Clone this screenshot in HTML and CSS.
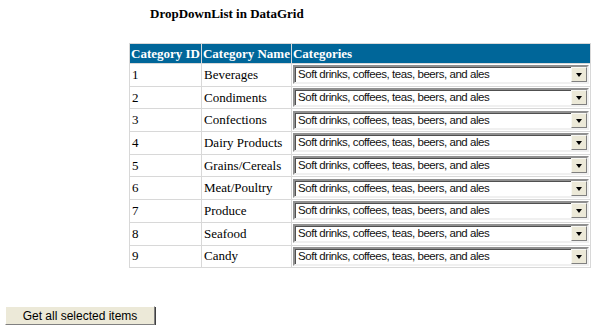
FILE: index.html
```html
<!DOCTYPE html>
<html lang="en">
<head>
    <meta charset="UTF-8">
    <title>DropDownList in DataGrid</title>
    <link rel="stylesheet" href="styles.css">
</head>
<body>
    <!-- Page title -->
    <h4 class="title">DropDownList in DataGrid</h4>
    <table class="grid">
        <tr>
            <th class="col-id">Category ID</th>
            <th class="col-name">Category Name</th>
            <th>Categories</th>
        </tr>
        <tr><td>1</td><td>Beverages</td><td><div class="dropdown"><span class="value">Soft drinks, coffees, teas, beers, and ales</span><span class="arrow"></span></div></td></tr>
        <tr><td>2</td><td>Condiments</td><td><div class="dropdown"><span class="value">Soft drinks, coffees, teas, beers, and ales</span><span class="arrow"></span></div></td></tr>
        <tr><td>3</td><td>Confections</td><td><div class="dropdown"><span class="value">Soft drinks, coffees, teas, beers, and ales</span><span class="arrow"></span></div></td></tr>
        <tr><td>4</td><td>Dairy Products</td><td><div class="dropdown"><span class="value">Soft drinks, coffees, teas, beers, and ales</span><span class="arrow"></span></div></td></tr>
        <tr><td>5</td><td>Grains/Cereals</td><td><div class="dropdown"><span class="value">Soft drinks, coffees, teas, beers, and ales</span><span class="arrow"></span></div></td></tr>
        <tr><td>6</td><td>Meat/Poultry</td><td><div class="dropdown"><span class="value">Soft drinks, coffees, teas, beers, and ales</span><span class="arrow"></span></div></td></tr>
        <tr><td>7</td><td>Produce</td><td><div class="dropdown"><span class="value">Soft drinks, coffees, teas, beers, and ales</span><span class="arrow"></span></div></td></tr>
        <tr><td>8</td><td>Seafood</td><td><div class="dropdown"><span class="value">Soft drinks, coffees, teas, beers, and ales</span><span class="arrow"></span></div></td></tr>
        <tr><td>9</td><td>Candy</td><td><div class="dropdown"><span class="value">Soft drinks, coffees, teas, beers, and ales</span><span class="arrow"></span></div></td></tr>
    </table>
    <button class="get-all">Get all selected items</button>
</body>
</html>
```

FILE: styles.css
```css
body {
    margin: 0;
    background-color: white;
    font-family: "Liberation Serif", "Times New Roman", serif;
    font-size: 13px;
    color: black;
}
.title {
    margin: 6px 0 0 150px;
    font-size: 13px;
    font-weight: bold;
    line-height: 15px;
}
.grid {
    margin: 22px 0 0 129px;
    width: 462px;
    border-collapse: collapse;
    border: 1px solid #d8d8d8;
}
.grid th {
    background-color: #006699;
    color: white;
    font-weight: bold;
    text-align: left;
    padding: 0 1px;
    height: 19px;
    border: 1px solid #d8d8d8;
    white-space: nowrap;
}
.grid .col-id {
    width: 67px;
}
.grid .col-name {
    width: 86px;
}
.grid td {
    height: 21.7px;
    padding: 0 1px;
    border: 1px solid #d8d8d8;
    white-space: nowrap;
}
.grid td:first-child,
.grid td:nth-child(2) {
    padding-left: 2px;
}
.dropdown {
    display: flex;
    align-items: stretch;
    height: 15px;
    border: 2px solid;
    border-color: #909090 #f0f0f0 #f0f0f0 #909090;
    box-shadow: inset 1px 1px 0 #505050;
    background-color: white;
    font-family: "Liberation Sans", Arial, sans-serif;
    font-size: 11.5px;
    letter-spacing: -0.45px;
    line-height: 15px;
    color: #111;
}
.dropdown .value {
    flex: 1;
    padding-left: 3px;
}
.dropdown .arrow {
    position: relative;
    width: 14px;
    background-color: #ece9d8;
    border: 1px solid;
    border-color: #f8f8f4 #808080 #808080 #f8f8f4;
}
.dropdown .arrow::after {
    content: "";
    position: absolute;
    left: 4px;
    top: 5px;
    border-style: solid;
    border-width: 4px 3.5px 0 3.5px;
    border-color: black transparent transparent transparent;
}
.get-all {
    display: block;
    margin: 38px 0 0 5px;
    width: 150px;
    height: 19px;
    padding: 0;
    background-color: #ece9d8;
    border: 1px solid;
    border-color: #ffffff #808080 #808080 #ffffff;
    box-shadow: 1px 1px 0 #404040;
    font-family: "Liberation Sans", Arial, sans-serif;
    font-size: 12px;
    color: black;
}
```
